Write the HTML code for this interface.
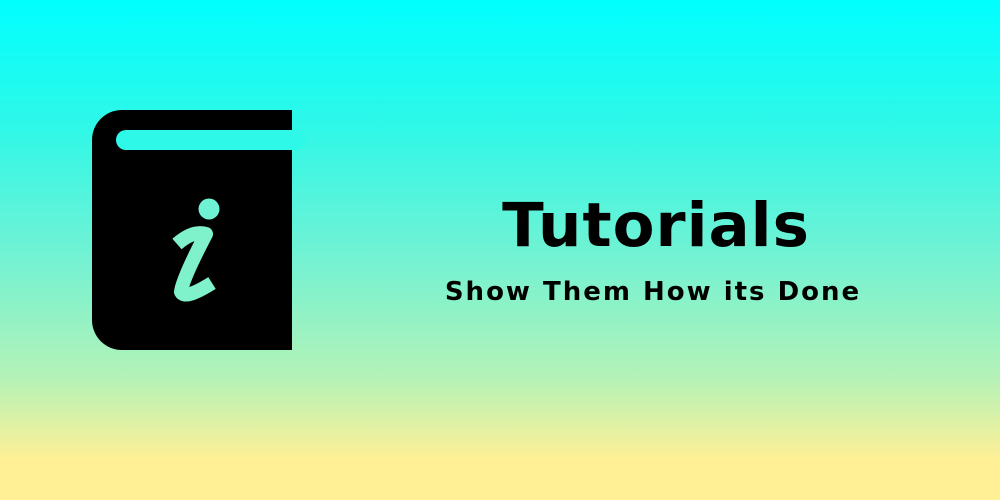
<!DOCTYPE html>
<html><head><meta charset="utf-8"><style>
html,body{margin:0;padding:0}
body{width:1000px;height:500px;overflow:hidden;background:linear-gradient(to bottom,#00ffff 0%,#2ef8e8 25%,#6ff2d4 50%,#b2f2b8 75%,#fff096 92%,#fff096 100%)}
</style></head><body>
<svg width="1000" height="500" style="position:absolute;left:0;top:0">
<path d="M122 110 H292 V350 H122 A30 30 0 0 1 92 320 V140 A30 30 0 0 1 122 110 Z" fill="#000"/>
<rect x="116" y="130" width="190" height="20" rx="10" fill="#2ef8e8"/>
<rect x="280" y="130" width="12" height="20" fill="#2ef8e8"/>
<circle cx="209" cy="209" r="10.5" fill="#6ff2d4"/>
<path d="M177 244 Q193 230 206 234 Q182 280 181 292 Q185 300 212 283" fill="none" stroke="#7ff2cc" stroke-width="14" stroke-linecap="butt" stroke-linejoin="round"/>
<text x="656" y="246" text-anchor="middle" font-family="DejaVu Sans, sans-serif" font-weight="bold" font-size="61" letter-spacing="1">Tutorials</text>
<text x="653" y="300" text-anchor="middle" font-family="DejaVu Sans, sans-serif" font-weight="bold" font-size="26" letter-spacing="2">Show Them How its Done</text>
</svg>
</body></html>
